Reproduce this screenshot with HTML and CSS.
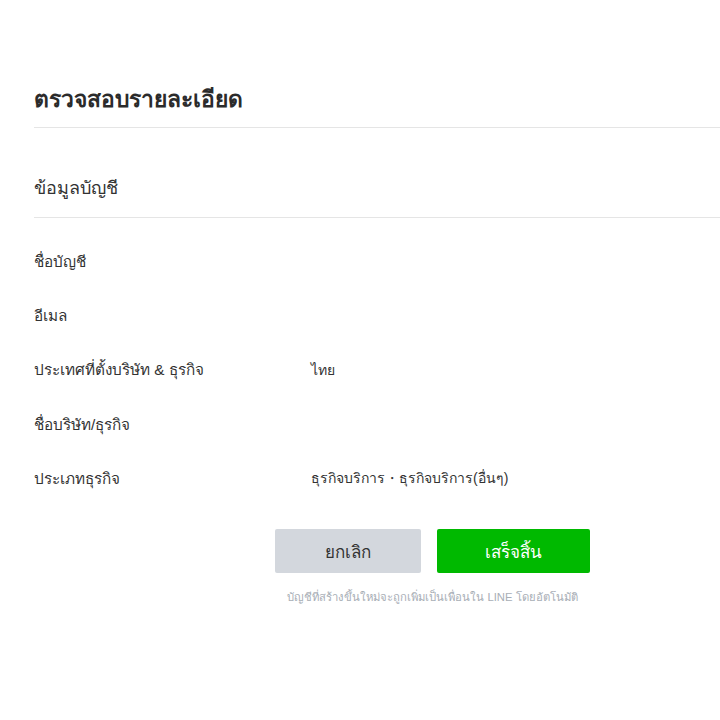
FILE: index.html
```html
<!DOCTYPE html>
<html lang="th">
<head>
<meta charset="utf-8">
<link rel="stylesheet" href="styles.css">
</head>
<body>
<div class="page">
  <h1 class="title">ตรวจสอบรายละเอียด</h1>
  <h2 class="section">ข้อมูลบัญชี</h2>
  <div class="rows">
    <div class="row"><div class="label">ชื่อบัญชี</div><div class="value"></div></div>
    <div class="row"><div class="label">อีเมล</div><div class="value"></div></div>
    <div class="row"><div class="label">ประเทศที่ตั้งบริษัท &amp; ธุรกิจ</div><div class="value">ไทย</div></div>
    <div class="row"><div class="label">ชื่อบริษัท/ธุรกิจ</div><div class="value"></div></div>
    <div class="row"><div class="label">ประเภทธุรกิจ</div><div class="value">ธุรกิจบริการ・ธุรกิจบริการ(อื่นๆ)</div></div>
  </div>
  <div class="actions">
    <div class="buttons">
      <button class="btn cancel">ยกเลิก</button>
      <button class="btn done">เสร็จสิ้น</button>
    </div>
    <p class="note">บัญชีที่สร้างขึ้นใหม่จะถูกเพิ่มเป็นเพื่อนใน LINE โดยอัตโนมัติ</p>
  </div>
</div>
</body>
</html>
```
FILE: styles.css
```css
html, body {
  margin: 0;
  padding: 0;
  background: #fff;
}
body {
  font-family: "Liberation Sans", "Noto Sans", sans-serif;
  color: #333;
}
.page {
  padding: 80px 0 0 34px;
}
.title {
  margin: 0;
  font-size: 22.8px;
  font-weight: bold;
  line-height: 38px;
  padding-bottom: 9px;
  border-bottom: 1px solid #e5e5e5;
  color: #2b2b2b;
}
.section {
  margin: 0;
  padding: 45px 0 14px;
  font-size: 18px;
  font-weight: normal;
  line-height: 30px;
  border-bottom: 1px solid #e5e5e5;
  color: #333;
}
.rows {
  padding-top: 16px;
}
.row {
  display: flex;
  height: 54.3px;
  align-items: center;
  font-size: 15.3px;
}
.label {
  width: 277px;
}
.value {
  font-size: 14px;
}
.actions {
  width: 315px;
  margin-left: 241px;
  margin-top: 24px;
  display: flex;
  flex-direction: column;
  align-items: center;
}
.buttons {
  display: flex;
  gap: 16px;
}
.btn {
  border: none;
  border-radius: 2px;
  height: 44px;
  font-family: inherit;
  font-size: 17px;
  padding: 0;
}
.cancel {
  width: 146px;
  background: #d3d7dd;
  color: #333;
}
.done {
  width: 153px;
  background: #00b900;
  color: #fff;
}
.note {
  margin: 15px 0 0;
  font-size: 11.3px;
  color: #a8aeb6;
}
```
